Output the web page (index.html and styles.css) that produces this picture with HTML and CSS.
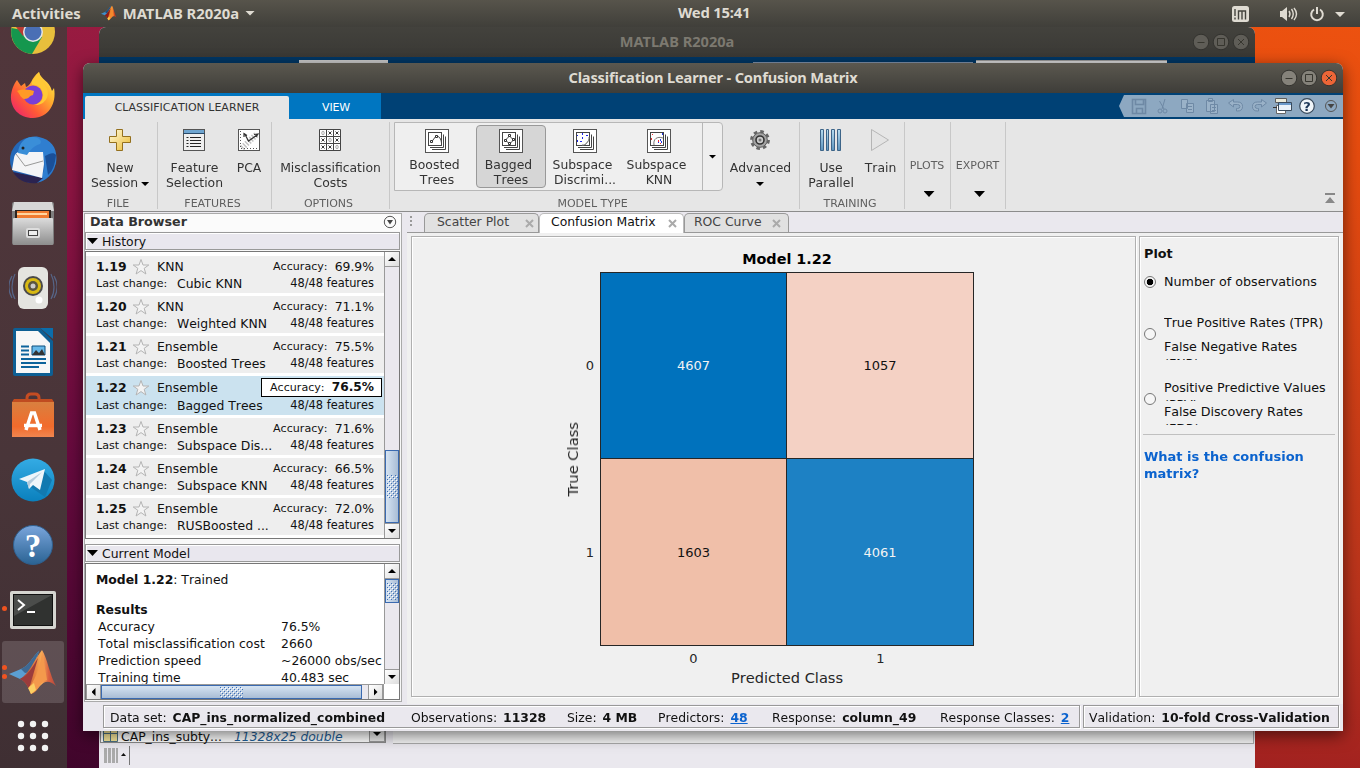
FILE: index.html
```
<!DOCTYPE html>
<html lang="en">
<head>
<meta charset="utf-8">
<title>Classification Learner - Confusion Matrix</title>
<link rel="stylesheet" href="styles.css">
</head>
<body>
<svg class="defs" width="0" height="0">
  <defs>
    <linearGradient id="gold" x1="0" y1="0" x2="1" y2="1"><stop offset="0" stop-color="#fffbe0"/><stop offset="1" stop-color="#eab92e"/></linearGradient>
    <linearGradient id="bar" x1="0" y1="0" x2="0" y2="1"><stop offset="0" stop-color="#b5dcf0"/><stop offset="1" stop-color="#5b93bd"/></linearGradient>
    <linearGradient id="fox" x1="1" y1="0" x2="0" y2="1"><stop offset="0" stop-color="#fff44f"/><stop offset=".35" stop-color="#ffb02e"/><stop offset=".65" stop-color="#ff5a36"/><stop offset="1" stop-color="#e8167a"/></linearGradient>
    <linearGradient id="peak" x1="0" y1="0" x2="1" y2="0"><stop offset="0" stop-color="#7d1b1b"/><stop offset=".4" stop-color="#e0691e"/><stop offset=".6" stop-color="#f8a13c"/><stop offset=".8" stop-color="#d2441f"/><stop offset="1" stop-color="#a52a1c"/></linearGradient>
    <linearGradient id="bag" x1="0" y1="0" x2="0" y2="1"><stop offset="0" stop-color="#d9803f"/><stop offset=".7" stop-color="#f26b2c"/><stop offset="1" stop-color="#f08650"/></linearGradient>
    <linearGradient id="tele" x1="0" y1="0" x2="0" y2="1"><stop offset="0" stop-color="#34abe4"/><stop offset="1" stop-color="#0a80bd"/></linearGradient>
    <linearGradient id="helpg" x1="0" y1="0" x2="0" y2="1"><stop offset="0" stop-color="#7aa5dc"/><stop offset="1" stop-color="#2a6393"/></linearGradient>
    <linearGradient id="steel" x1="0" y1="0" x2="0" y2="1"><stop offset="0" stop-color="#dcdcdc"/><stop offset="1" stop-color="#8d8d8d"/></linearGradient>
    <symbol id="star" viewBox="0 0 18 18"><path d="M9 1.500 11 7H16.800L12.200 10.300 13.900 16 9 12.600 4.100 16 5.800 10.300 1.200 7H7Z" fill="#f3f3f3" stroke="#b4b4b4"/></symbol>
    <symbol id="matlab" viewBox="0 0 48 48">
      <path d="M0 26 12 21C20 18 24 8 30 3L25 19 19 35 11 31Z" fill="#3f8fcb"/>
      <path d="M12 21C20 18 24 8 30 3L22 24 16 25Z" fill="#1d4f80"/>
      <path d="M11 31C20 26 25 12 33 2 38 9 41 28 47 38 40 32 36 33 31 38 27 43 26 45 22 46 20 40 17 34 11 31Z" fill="url(#peak)"/>
      <path d="M11 31C18 29 24 18 29 10L20 41C17 35 15 32 11 31Z" fill="#8a1a1a"/>
      <path d="M33 3C32 15 27 32 20 39L22 46C30 42 30 34 38 32Z" fill="#f3882d"/>
      <path d="M19 40 22 46 27 42 25 35Z" fill="#fcc748"/>
    </symbol>
    <symbol id="stack" viewBox="0 0 24 24"><rect x=".5" y=".5" width="23" height="23" fill="#fff" stroke="#555"/><path d="M7 20.500H20.500V7.500M5 18.500H18.500V5.500" fill="none" stroke="#444"/><rect x="3.500" y="3.500" width="13" height="13" fill="#fff" stroke="#444"/></symbol>
    <pattern id="dots" width="4" height="4" patternUnits="userSpaceOnUse"><path d="M0 0h1v1H0zM2 2h1v1H2z" fill="#3f6fb5"/><path d="M1 1h1v1H1zM3 3h1v1H3z" fill="#fff"/></pattern>
  </defs>
</svg>

<div class="desktop">
  <div class="window back">
    <div class="back-title"><span>MATLAB R2020a</span>
      <svg class="wbtns" width="56" height="18" viewBox="0 0 56 18"><g fill="#5f5d57" stroke="#34332f"><circle cx="8" cy="9" r="7.800"/><circle cx="28" cy="9" r="7.800"/><circle cx="48" cy="9" r="7.800"/></g><path d="M4.500 9.500h7M24.500 5.500h7v7h-7zM45 6l6 6M51 6l-6 6" fill="none" stroke="#37362f"/></svg>
    </div>
    <div class="back-strip"><i class="bt1"></i><i class="bt2"></i><i class="bt3"></i></div>
    <div class="back-body">
      <div class="workspace">
        <svg width="15" height="14" viewBox="0 0 15 14"><path d="M.5-3V13.500H14.500V-3M.500 5.500H14.500M7.500-3V13" fill="#f7e79a" stroke="#4d7285"/></svg>
        <span class="wname">CAP_ins_subty...</span><span class="wval">11328x25 double</span>
        <b class="wdrop"><i class="tri"></i></b>
      </div>
      <div class="command"></div>
    </div>
    <div class="back-status"><svg width="28" height="20" viewBox="0 0 28 20"><path d="M1 2h3v15H1zM5 2h3v15H5zM9 2h3v15H9zM13 2h2v15h-2z" fill="#aaa"/><path d="M18 10h5l-2.500-3z" fill="#111"/><path d="M26.500 0v19" stroke="#777"/></svg></div>
  </div>

  <div class="window front">
    <div class="title"><span>Classification Learner - Confusion Matrix</span>
      <svg class="wbtns" width="56" height="18" viewBox="0 0 56 18"><g fill="#85827a" stroke="#34332f"><circle cx="8" cy="9" r="7.800"/><circle cx="28" cy="9" r="7.800"/><circle cx="48" cy="9" r="7.800" fill="#ec6537"/></g><path d="M4.500 9.500h7M24.500 5.500h7v7h-7zM45 6l6 6M51 6l-6 6" fill="none" stroke="#37362f"/></svg>
    </div>
    <div class="tabstrip">
      <div class="tabs"><div class="tab on">CLASSIFICATION LEARNER</div><div class="tab">VIEW</div></div>
      <svg class="quick" width="224" height="22" viewBox="0 0 224 22">
        <path d="M5 0H224V22H5L0 11Z" fill="#8da8c1"/>
        <g fill="none" stroke="#6e89a5">
          <path d="M13.500 4.500h13v14h-13zM16.500 4.500v5h8v-5M17.500 18.500v-5h6v5" stroke-width="1.600"/>
          <path d="M46 4l-3 10M40.500 6 45 14"/><circle cx="41" cy="16" r="2"/><circle cx="46" cy="16" r="2"/>
          <path d="M62.500 4.500h6v9h-6zM67.500 8.500h7v9h-7zM69 11.500h4M69 14.500h4" fill="#9ab2c8"/>
          <path d="M87.500 5.500h8v11h-8zM89.500 3.500h4v3h-4zM91.500 9.500h7v9h-7zM93 12.500h4M93 15.500h4" fill="#9ab2c8"/>
          <path d="M114.500 4.500v2.500h4q5 0 5 4.500t-5 4.500h-1v-2.500h1q2.500 0 2.500-2t-2.500-2h-4v2.500l-5-4z" fill="#9ab2c8"/>
          <path d="M142.500 4.500v2.500h-4q-5 0-5 4.500t5 4.500h1v-2.500h-1q-2.500 0-2.500-2t2.500-2h4v2.500l5-4z" fill="#9ab2c8"/>
        </g>
        <path d="M156.500 3.500h11v4h-11z" fill="#e9e9d9" stroke="#5d5d5d"/><path d="M157.500 10.500h9v8h-9z" fill="#fff" stroke="#666"/><path d="M159.500 7.500h13v8h-13z" fill="#e9f2fa" stroke="#394a5c"/><path d="M160 8h12v2h-12z" fill="#6a9acb"/><path d="M154 12.500h4" stroke="#333"/>
        <circle cx="188" cy="11" r="7.300" fill="#f0f5f9" stroke="#38495b" stroke-width="1.200"/><text x="188" y="16" class="q">?</text>
        <circle cx="212" cy="11" r="5.500" fill="none" stroke="#555"/><path d="M208.500 9h7L212 13.500z" fill="#444"/>
      </svg>
    </div>

    <div class="toolstrip">
      <section class="sec s-file"><div class="btns">
        <div class="btn"><svg width="24" height="24" viewBox="0 0 24 24"><path d="M8.500 1.500h6v7h8v6h-8v8h-6v-8h-7v-6h7z" fill="url(#gold)" stroke="#94701e"/></svg><span>New</span><span>Session <i class="tri"></i></span></div>
      </div><h4>FILE</h4></section>
      <section class="sec s-feat"><div class="btns">
        <div class="btn w76"><svg width="24" height="24" viewBox="0 0 24 24"><rect x="1.500" y="1.500" width="21" height="21" fill="#efefef" stroke="#555"/><path d="M2 2h20v3H2z" fill="#6fa5d0"/><path d="M1 5.500h22" stroke="#2a4a68"/><path d="M8 9.500h11M8 12.500h11M8 15.500h11M8 18.500h11M4.500 9.500h2M4.500 12.500h2M4.500 15.500h2M4.500 18.500h2" stroke="#222"/></svg><span>Feature</span><span>Selection</span></div>
        <div class="btn w34"><svg width="24" height="24" viewBox="0 0 24 24"><rect x="1.500" y="1.500" width="21" height="21" fill="#fff" stroke="#555"/><path d="M5 20 20 6" stroke="#aaa" stroke-width="6" stroke-dasharray="1.500 1.500" opacity=".7"/><path d="M7.500 5.500l4 7.500L20 7M17 6.500l4-.5-2 3M7 9V5.500l3 2" fill="none" stroke="#333" stroke-width="1.200"/><path d="M3.500 3v17.500H22" fill="none" stroke="#555" stroke-dasharray="1 2"/></svg><span>PCA</span></div>
      </div><h4>FEATURES</h4></section>
      <section class="sec s-opt"><div class="btns">
        <div class="btn"><svg width="24" height="24" viewBox="0 0 24 24"><path d="M1.500 1.500h21v21h-21zM8.500 1v22M15.500 1v22M1 8.500h22M1 15.500h22" fill="#fff" stroke="#444"/><path d="M10.500 3.500l3 3m0-3l-3 3M17.500 3.500l3 3m0-3l-3 3M3.500 10.500l3 3m0-3l-3 3M17.500 10.500l3 3m0-3l-3 3M3.500 17.500l3 3m0-3l-3 3M10.500 17.500l3 3m0-3l-3 3" stroke="#222" stroke-width=".9"/><g fill="none" stroke="#aaa"><ellipse cx="5" cy="5" rx="1.200" ry="1.800"/><ellipse cx="12" cy="12" rx="1.200" ry="1.800"/><ellipse cx="19" cy="19" rx="1.200" ry="1.800"/></g></svg><span>Misclassification</span><span>Costs</span></div>
      </div><h4>OPTIONS</h4></section>
      <section class="sec s-model"><div class="model-row">
        <div class="gallery">
          <div class="cell"><svg width="24" height="24" viewBox="0 0 24 24"><use href="#stack"/><path d="M6.500 13l4.500-6c3.500 0 5 3 5.500 7" fill="none" stroke="#444"/><path d="M5.500 11.500h2v2h-2zM10.500 6.500h2v2h-2z" fill="#fff" stroke="#333"/></svg><span class="nudge">Boosted</span><span>Trees</span></div>
          <div class="cell sel"><svg width="24" height="24" viewBox="0 0 24 24"><use href="#stack"/><path d="M6.500 11 10.500 7 14.500 11 10.500 15Z" fill="none" stroke="#444"/><path d="M5.500 10.500h2v2h-2zM9.500 5.500h2v2h-2zM13.500 9.500h2v2h-2zM9.500 13.500h2v2h-2z" fill="#fff" stroke="#333"/></svg><span class="nudge">Bagged</span><span>Trees</span></div>
          <div class="cell"><svg width="24" height="24" viewBox="0 0 24 24"><use href="#stack"/><path d="M9 4h1v2H9zM4 6h1v1H4zM13 6h2v1h-2zM4 11h1v2H4zM9 8h1v2H9zM7 12h2v1H7z" fill="#1d28e8"/><path d="M16 8c0 5-3 8-7 8M16 11l-4 5" fill="none" stroke="#888"/></svg><span class="nudge">Subspace</span><span>Discrimi...</span></div>
          <div class="cell"><svg width="24" height="24" viewBox="0 0 24 24"><use href="#stack"/><path d="M5 5h1v1H5zM4 9h1v2H4zM11 11h1v2h-1zM13 14h1v1h-1z" fill="#e33"/><path d="M15 4h1v2h-1zM13 10h1v2h-1zM14 12h1v2h-1zM11 13h1v1h-1z" fill="#2233e0"/><path d="M7 16c-1-6 3-9 9-7" fill="none" stroke="#777"/></svg><span class="nudge">Subspace</span><span>KNN</span></div>
          <div class="more"><i class="tri"></i></div>
        </div>
        <div class="btn adv"><svg width="24" height="24" viewBox="0 0 24 24"><circle cx="12" cy="12" r="8.600" fill="none" stroke="#666" stroke-width="2.600" stroke-dasharray="3.600 3.150"/><circle cx="12" cy="12" r="7.300" fill="#a4a4a4" stroke="#5a5a5a"/><circle cx="12" cy="12" r="4" fill="#ccc" stroke="#333" stroke-width="1.600"/><circle cx="12" cy="12" r="1.500" fill="#777"/></svg><span>Advanced</span><span><i class="tri"></i></span></div>
      </div><h4>MODEL TYPE</h4></section>
      <section class="sec s-train"><div class="btns">
        <div class="btn w64"><svg width="24" height="24" viewBox="0 0 24 24"><path d="M1.500 1.500h3v21h-3zM7.500 1.500h2v21h-2zM12.500 1.500h3v21h-3zM18.500 1.500h3v21h-3z" fill="url(#bar)" stroke="#3c6488"/></svg><span>Use</span><span>Parallel</span></div>
        <div class="btn w34"><svg width="24" height="24" viewBox="0 0 24 24"><path d="M3.500 1.500 20.500 12 3.500 22.500Z" fill="#e4e4e4" stroke="#b5b5b5"/></svg><span>Train</span></div>
      </div><h4>TRAINING</h4></section>
      <section class="sec s-plots"><h4>PLOTS</h4><i class="tri big"></i></section>
      <section class="sec s-exp"><h4>EXPORT</h4><i class="tri big"></i></section>
      <svg class="collapse" width="12" height="12" viewBox="0 0 12 12"><path d="M1 1h10v2H1zM1 11h10L6 5z" fill="#888"/></svg>
    </div>

    <div class="main">
      <aside class="browser">
        <header class="db-head"><b>Data Browser</b><svg width="14" height="14" viewBox="0 0 14 14"><circle cx="7" cy="7" r="5.700" fill="none" stroke="#555"/><path d="M4 5h6L7 9.500z" fill="#444"/></svg></header>
        <div class="group"><i class="tri"></i>History</div>
        <div class="history">
          <ul>
            <li><b>1.19</b><svg width="18" height="18"><use href="#star"/></svg><span>KNN</span><small>Accuracy:</small><em>69.9%</em><small class="lc">Last change:</small><span class="mt">Cubic KNN</span><small class="ft">48/48 features</small></li>
            <li><b>1.20</b><svg width="18" height="18"><use href="#star"/></svg><span>KNN</span><small>Accuracy:</small><em>71.1%</em><small class="lc">Last change:</small><span class="mt">Weighted KNN</span><small class="ft">48/48 features</small></li>
            <li><b>1.21</b><svg width="18" height="18"><use href="#star"/></svg><span>Ensemble</span><small>Accuracy:</small><em>75.5%</em><small class="lc">Last change:</small><span class="mt">Boosted Trees</span><small class="ft">48/48 features</small></li>
            <li class="cur"><b>1.22</b><svg width="18" height="18"><use href="#star"/></svg><span>Ensemble</span><div class="best"><small>Accuracy:</small><em>76.5%</em></div><small class="lc">Last change:</small><span class="mt">Bagged Trees</span><small class="ft">48/48 features</small></li>
            <li><b>1.23</b><svg width="18" height="18"><use href="#star"/></svg><span>Ensemble</span><small>Accuracy:</small><em>71.6%</em><small class="lc">Last change:</small><span class="mt">Subspace Dis...</span><small class="ft">48/48 features</small></li>
            <li><b>1.24</b><svg width="18" height="18"><use href="#star"/></svg><span>Ensemble</span><small>Accuracy:</small><em>66.5%</em><small class="lc">Last change:</small><span class="mt">Subspace KNN</span><small class="ft">48/48 features</small></li>
            <li><b>1.25</b><svg width="18" height="18"><use href="#star"/></svg><span>Ensemble</span><small>Accuracy:</small><em>72.0%</em><small class="lc">Last change:</small><span class="mt">RUSBoosted ...</span><small class="ft">48/48 features</small></li>
          </ul>
          <div class="vbar"><i class="ab"><i class="tri up"></i></i><i class="track"></i><i class="thumb h1"><svg width="11" height="23"><rect width="11" height="23" fill="url(#dots)"/></svg></i><i class="ab"><i class="tri"></i></i></div>
        </div>
        <div class="group cm"><i class="tri"></i>Current Model</div>
        <div class="model">
          <div class="mtext">
            <p><b>Model 1.22</b>: Trained</p>
            <p class="res"><b>Results</b></p>
            <dl><dt>Accuracy</dt><dd>76.5%</dd><dt>Total misclassification cost</dt><dd>2660</dd><dt>Prediction speed</dt><dd>~26000 obs/sec</dd><dt>Training time</dt><dd>40.483 sec</dd></dl>
          </div>
          <div class="vbar"><i class="ab"><i class="tri up"></i></i><i class="thumb h2"><svg width="11" height="17"><rect width="11" height="17" fill="url(#dots)"/></svg></i><i class="track"></i><i class="ab"><i class="tri"></i></i></div>
          <div class="hbar"><i class="ab"><i class="tri left"></i></i><i class="thumb h3"><svg width="23" height="11"><rect width="23" height="11" fill="url(#dots)"/></svg></i><i class="track"></i><i class="ab"><i class="tri right"></i></i></div>
        </div>
      </aside>

      <div class="docs">
        <nav class="doctabs"><svg class="grip" width="4" height="12" viewBox="0 0 4 12"><path d="M1 1h2v2H1zM1 5h2v2H1zM1 9h2v2H1z" fill="#999"/></svg>
          <div class="dt d1"><span>Scatter Plot</span><svg width="9" height="9" viewBox="0 0 9 9"><path d="M1 1l7 7M8 1 1 8"/></svg></div>
          <div class="dt d2 on"><span>Confusion Matrix</span><svg width="9" height="9" viewBox="0 0 9 9"><path d="M1 1l7 7M8 1 1 8"/></svg></div>
          <div class="dt d3"><span>ROC Curve</span><svg width="9" height="9" viewBox="0 0 9 9"><path d="M1 1l7 7M8 1 1 8"/></svg></div>
        </nav>
        <div class="panes">
          <div class="pane plot">
            <h3>Model 1.22</h3>
            <div class="ylab"><span>True Class</span></div>
            <div class="yticks"><span>0</span><span>1</span></div>
            <div class="matrix"><div class="c a">4607</div><div class="c b">1057</div><div class="c d">1603</div><div class="c e">4061</div></div>
            <div class="xticks"><span>0</span><span>1</span></div>
            <div class="xlab">Predicted Class</div>
          </div>
          <div class="pane opts">
            <h5>Plot</h5>
            <div class="radio r1"><i class="dot on"></i><div><span>Number of observations</span></div></div>
            <div class="radio r2"><i class="dot"></i><div><span>True Positive Rates (TPR)</span><span>False Negative Rates<br>(FNR)</span></div></div>
            <div class="radio r3"><i class="dot"></i><div><span>Positive Predictive Values<br>(PPV)</span><span>False Discovery Rates<br>(FDR)</span></div></div>
            <hr>
            <a>What is the confusion<br>matrix?</a>
          </div>
        </div>
      </div>
    </div>

    <footer class="status">
      <div class="sbox info"><span>Data set: <b>CAP_ins_normalized_combined</b></span><span>Observations: <b>11328</b></span><span>Size: <b>4 MB</b></span><span>Predictors: <b class="lk">48</b></span><span>Response: <b>column_49</b></span><span>Response Classes: <b class="lk">2</b></span></div>
      <div class="sbox valid"><span>Validation: <b>10-fold Cross-Validation</b></span></div>
    </footer>
  </div>

  <div class="dock">
    <div class="app"><svg viewBox="0 0 48 48"><circle cx="24" cy="24" r="22" fill="#e8bf3c"/><path d="M24 24 2.500 20A22 22 0 0 0 23 46L33 29Z" fill="#15974e"/><path d="M4 15A22 22 0 0 1 45 17H24L14 28Z" fill="#b83b33"/><circle cx="24" cy="24" r="10" fill="#e6e6e6"/><circle cx="24" cy="24" r="8.500" fill="#4a6fb5"/></svg></div>
    <div class="app"><svg viewBox="0 0 48 48"><path d="M24 46C10 46 1 36 2 23 3 16 5 12 8 8L12 14 16 11 17 15C22 14 22 6 30 0 32 8 40 8 43 19L45 16C48 32 39 46 24 46Z" fill="url(#fox)"/><circle cx="24" cy="23" r="9.500" fill="#7a3fd6"/><path d="M8 19c6-3 14-1 17 0l-1 4c-5 1-3 4-9 4-4-2-4-5-7-8z" fill="#ff9a26"/><path d="M30 0c-4 7-8 7-7 13 6-1 10 4 11 8 1 6-3 11-9 12 12 1 17-11 12-18C35 10 31 7 30 0z" fill="#ffc935"/></svg></div>
    <div class="app"><svg viewBox="0 0 48 48"><circle cx="24" cy="24" r="23" fill="#2468b8"/><path d="M11 15C12 4 20-1 30 1c14 3 19 13 17 26C43 39 37 45 27 47c8-8 10-15 8-24z" fill="#2f7ed0"/><path d="M36 20c5-3 9-4 11-1-1 9-3 16-8 20z" fill="#1a4f98"/><path d="M4 36 34 42 28 47C18 48 9 45 4 36Z" fill="#2b2350"/><path d="M5 22C6 15 14 14 20 16L34 16 35 28 33 42 3 34Z" fill="#f4f4f6"/><path d="M7 18l9 12 18-5" fill="none" stroke="#999"/><path d="M9 17C10 5 18 0 25 1c7 1 8 5 6 7-6 2-9 5-13 11z" fill="#3a8ed8"/><circle cx="14" cy="12" r="1.500" fill="#222"/></svg></div>
    <div class="app"><svg viewBox="0 0 48 48"><rect x="3" y="2" width="42" height="43" rx="2" fill="#7e7e7e"/><path d="M5 2h38l2 9H3z" fill="#d7d7d7"/><path d="M6 10h36v11H6z" fill="#2c2420"/><path d="M8 11h32v9H8z" fill="#f07b30"/><path d="M8 13h30v2H8z" fill="#ffd5a0"/><rect x="4" y="18" width="40" height="27" rx="1" fill="url(#steel)"/><rect x="17" y="28" width="14" height="10" rx="2" fill="#ddd"/><rect x="19.500" y="30.500" width="9" height="5" fill="#eee" stroke="#444"/></svg></div>
    <div class="app"><svg viewBox="0 0 48 48"><g fill="none" stroke="#566486" stroke-width="1.200"><path d="M6 10c-4 8-4 18 0 25M42 10c4 8 4 18 0 25M3 12c-4 7-4 15 0 22M45 12c4 7 4 15 0 22"/></g><rect x="9" y="3" width="30" height="42" rx="6" fill="#e4e4e0"/><circle cx="24" cy="22" r="10" fill="#4a4a4a"/><circle cx="24" cy="22" r="8" fill="#d8b913"/><circle cx="24" cy="22" r="5" fill="#5a5540"/><circle cx="24" cy="22" r="2.500" fill="#ccc"/><circle cx="30" cy="36" r="3.500" fill="#fff"/></svg></div>
    <div class="app"><svg viewBox="0 0 48 48"><path d="M6 0h25l13 13v33q0 2-2 2H6q-2 0-2-2V2q0-2 2-2z" fill="#0d5f94"/><path d="M7 3h22l12 12v30H7z" fill="#f7f7f7"/><path d="M31 0h13v11z" fill="#0b6daa"/><path d="M12 18.500h8M12 22.500h8M12 26.500h8M12 31h25M12 35h25M12 39h18" stroke="#0c639b" stroke-width="2"/><path d="M23 18h13v9H23z" fill="#67b9ea" stroke="#0c4f7d"/><path d="M23 27l4-5 3 3 3-4 3 6z" fill="#333"/></svg></div>
    <div class="app"><svg viewBox="0 0 48 48"><path d="M18 14V6q0-4 4-4h4q4 0 4 4v8" fill="none" stroke="#c54c22" stroke-width="3"/><path d="M3 10h42v35H3z" fill="url(#bag)"/><path d="M3 10l2-3h38l2 3z" fill="#c04c20"/><path d="M17 38l5.500-17h3L31 38M15 33.500h18" fill="none" stroke="#fff" stroke-width="3.400"/></svg></div>
    <div class="app"><svg viewBox="0 0 48 48"><circle cx="24" cy="24" r="21.500" fill="url(#tele)"/><path d="M35 15 43 24 36 41 20 30z" fill="#1279b0"/><path d="M10 23 36 13 31 34 24 29 20 33 18 26Z" fill="#eef5fa"/><path d="M18 26 33 16 21 28 20 33Z" fill="#b5cbdc"/></svg></div>
    <div class="app"><svg viewBox="0 0 48 48"><circle cx="24" cy="25" r="19.500" fill="url(#helpg)" stroke="#2f5f8e"/><text x="24" y="37" class="bigq">?</text></svg></div>
    <div class="app"><svg viewBox="0 0 48 48"><rect x="1" y="7" width="46" height="38" rx="2" fill="#d5d5d0"/><rect x="4.500" y="10.500" width="39" height="31" fill="#303230" stroke="#111"/><path d="M5 11h38L5 32z" fill="#4b4d4b"/><path d="M9 16l6 5-6 5M18 28h8" fill="none" stroke="#fff" stroke-width="2"/></svg><i class="run r-one"></i></div>
    <div class="app active"><svg viewBox="0 0 48 48"><use href="#matlab"/></svg><i class="run r-a"></i><i class="run r-b"></i></div>
    <div class="app"><svg viewBox="0 0 48 48"><g fill="#f2f2f2"><circle cx="12" cy="12" r="3.200"/><circle cx="24" cy="12" r="3.200"/><circle cx="36" cy="12" r="3.200"/><circle cx="12" cy="24" r="3.200"/><circle cx="24" cy="24" r="3.200"/><circle cx="36" cy="24" r="3.200"/><circle cx="12" cy="36" r="3.200"/><circle cx="24" cy="36" r="3.200"/><circle cx="36" cy="36" r="3.200"/></g></svg></div>
  </div>

  <div class="topbar">
    <span class="act">Activities</span>
    <span class="appmenu"><svg width="16" height="16" viewBox="0 0 48 48"><use href="#matlab"/></svg><span>MATLAB R2020a</span><i class="tri"></i></span>
    <span class="clock">Wed 15:41</span>
    <svg class="tray" width="120" height="20" viewBox="0 0 120 20">
      <rect x="3" y="2" width="17" height="16" rx="2.500" fill="#dfdbd2"/><path d="M6 5v7M6 13.500v2M9.500 15.500V7h7v8.500M13 7v8.500" fill="none" stroke="#45443e" stroke-width="1.400"/>
      <g fill="none" stroke="#dfdbd2" stroke-width="1.400"><path d="M60 7q2 3 0 6M62.500 5q3.500 5 0 10M65 4q5 6 0 12"/><path d="M85 5.500a5.800 5.800 0 1 0 6 0M88 3v7" stroke-width="2"/></g>
      <path d="M51 7h2l5-4v14l-5-4h-2zM106 8h10l-5 5z" fill="#dfdbd2"/>
    </svg>
  </div>
</div>
</body>
</html>
```

FILE: styles.css
```
* { box-sizing: border-box; }
body { margin: 0; font: 12.4px/15px "DejaVu Sans", sans-serif; color: #111; font-kerning: none; }
i, em { font-style: normal; }
i { display: block; }
svg { display: block; flex: none; }
ul, p, dl, dd, h3, h4, h5 { margin: 0; padding: 0; }
.defs { position: absolute; }
.tri { display: inline-block; width: 8px; height: 4px; background: #000; clip-path: polygon(0 0, 100% 0, 50% 100%); flex: none; }
.tri.up { clip-path: polygon(0 100%, 100% 100%, 50% 0); }
.tri.left { width: 4px; height: 8px; clip-path: polygon(100% 0, 100% 100%, 0 50%); }
.tri.right { width: 4px; height: 8px; clip-path: polygon(0 0, 0 100%, 100% 50%); }

.desktop { position: relative; width: 1360px; height: 768px; overflow: hidden; background: linear-gradient(180deg, #9a1c40 0, #8c1442 25%, #660a3e 60%, #40052b 100%); }
.desktop::before { content: ""; position: absolute; inset: 0 0 0 1200px; background: linear-gradient(190deg, #ee5310 0, #e54b0f 20%, #b8331c 75%, #a02020 100%); }

/* shell */
.topbar { position: absolute; left: 0; top: 0; width: 1360px; height: 27px; display: flex; align-items: center; background: linear-gradient(#57544b, #403f3a); color: #dfdbd2; font: bold 14.8px/25px "Noto Sans", sans-serif; }
.topbar > span { margin-bottom: 1px; }
.act { margin-left: 12px; }
.appmenu { display: flex; align-items: center; gap: 6px; margin-left: 20px; }
.appmenu .tri { width: 10px; height: 5px; background: #dfdbd2; }
.clock { position: absolute; left: 678px; top: 0; letter-spacing: -.2px; }
.tray { margin-left: auto; margin-right: 11px; }
.dock { position: absolute; left: 0; top: 0; width: 67px; height: 768px; display: grid; grid-template-rows: repeat(12, 64px); background: linear-gradient(#51363b, #493539 60%, #3f2f33); }
.app { position: relative; display: grid; place-items: center; width: 66px; }
.app > svg { width: 48px; height: 48px; }
.app.active::before { content: ""; position: absolute; left: 2px; top: 1px; width: 62px; height: 62px; border-radius: 3px; background: rgba(255,255,255,.15); }
.run { position: absolute; left: 2px; width: 5px; height: 5px; border-radius: 50%; background: #f05320; }
.r-one { top: 30px; } .r-a { top: 25px; } .r-b { top: 34px; }
.bigq { font: bold 33px "Liberation Serif", serif; fill: #fff; text-anchor: middle; }

/* windows */
.window { position: absolute; display: flex; flex-direction: column; border-radius: 7px 7px 0 0; overflow: hidden; }
.back { left: 99px; top: 27px; width: 1156px; height: 741px; background: #eae8ee; }
.back-title { position: relative; flex: 0 0 30px; background: linear-gradient(#43423d, #3a3935); color: #7c7970; text-align: center; font: bold 14.6px/29px "Noto Sans", sans-serif; }
.wbtns { position: absolute; right: 6px; top: 6px; }
.back-strip { flex: 0 0 7px; background: #003765; display: flex; align-items: flex-end; }
.back-strip i { flex: none; }
.bt1 { width: 89px; height: 4px; margin-left: 200px; background: #ccc; }
.bt2 { width: 220px; height: 2px; margin-left: 365px; background: #8293ad; }
.bt3 { width: 191px; height: 4px; margin-left: 3px; background: #d8d8d8; border-top: 1px solid #999; }
.back-body { flex: 1; display: flex; align-items: flex-end; padding: 0 1px 0 1px; background: #eae8ee; }
.workspace { width: 286px; height: 30px; display: flex; align-items: flex-end; border: 1px solid #8a8a8a; border-top: 0; background: #fff; padding-left: 2px; }
.wname { margin-left: 3px; line-height: 11px; }
.wval { margin-left: 12px; font-style: italic; font-size: 12.4px; color: #1f5f99; line-height: 11px; }
.wdrop { margin-left: auto; width: 16px; height: 28px; border: 1px solid #999; background: #e8e8e8; display: grid; place-items: end center; padding-bottom: 5px; }
.command { flex: 1; height: 100px; margin-left: 7px; border: 1px solid #aaa; border-left: 0; background: #f4f4f4; margin-bottom: -1px; }
.back-status { flex: 0 0 24px; padding: 2px 4px; margin-top: 1px; }

.front { left: 83px; top: 63px; width: 1260px; height: 668px; background: #eae8ee; filter: drop-shadow(0 4px 8px rgba(0,0,0,.55)); }
.title { position: relative; flex: 0 0 30px; background: linear-gradient(#5b584f, #3e3d39); color: #dfdbd2; text-align: center; font: bold 14.6px/29px "Noto Sans", sans-serif; letter-spacing: -.15px; }
.tabstrip { flex: 0 0 26px; display: flex; justify-content: space-between; background: #004175; }
.tabs { display: flex; align-items: flex-end; width: 298px; padding-left: 2px; background: #0076c1; font-size: 11px; color: #fff; }
.tab { width: 92px; height: 23px; text-align: center; line-height: 23px; padding-left: 2px; letter-spacing: -.2px; }
.tab.on { width: 204px; background: #e6e6e6; color: #333; border-radius: 2px 2px 0 0; padding-left: 0; letter-spacing: 0; }
.quick { margin-top: 2px; }
.q { font: bold 13px "DejaVu Sans", sans-serif; fill: #1b3556; text-anchor: middle; }

.toolstrip { position: relative; flex: 0 0 93px; display: flex; padding-top: 3px; background: #e6e6e6; border-bottom: 1px solid #8c8c8c; color: #333; }
.sec { height: 87px; border-right: 1px solid #c8c8c8; display: flex; flex-direction: column; justify-content: space-between; }
.sec h4 { font: 11px/13px "DejaVu Sans", sans-serif; color: #5f5f5f; text-align: center; padding-right: 4px; margin-bottom: -1px; }
.s-file { width: 75px; } .s-feat { width: 114px; } .s-opt { width: 118px; } .s-model { width: 410px; } .s-train { width: 105px; } .s-plots { width: 46px; } .s-exp { width: 55px; }
.btns { display: flex; }
.s-opt .btns, .s-file .btns { justify-content: center; }
.btn { display: flex; flex-direction: column; align-items: center; padding-top: 6px; white-space: nowrap; }
.btn svg { margin-bottom: 8px; margin-left: -1px; }
.btn .tri { vertical-align: 1px; margin-left: -1px; }
.w76 { width: 73px; } .w34 { width: 36px; } .w64 { width: 62px; }
.model-row { display: flex; padding-left: 4px; }
.gallery { width: 329px; height: 69px; display: flex; border: 1px solid #b7b7b7; border-radius: 0 4px 4px 0; background: #efefef; padding-left: 5px; }
.cell { width: 70px; height: 63px; margin: 2px 2px; padding: 3px 0 0; display: flex; flex-direction: column; align-items: center; border: 1px solid transparent; border-radius: 4px; white-space: nowrap; }
.cell.sel { background: #d6d6d6; border-color: #999; }
.cell svg { margin-bottom: 4px; }
.nudge { padding-right: 5px; }
.more { margin-left: auto; width: 20px; border-left: 1px solid #b7b7b7; display: grid; place-items: center; }
.adv { width: 75px; }
.s-train .w34 { width: 37px; }
.sec.s-plots, .sec.s-exp { align-items: center; justify-content: flex-start; padding-top: 37px; gap: 20px; }
.s-plots h4, .s-exp h4 { padding-right: 1px; }
.tri.big { width: 11px; height: 6px; margin-left: 3px; }
.collapse { position: absolute; right: 7px; bottom: 7px; }

.main { flex: 1; display: flex; min-height: 0; }
.browser { width: 318px; margin: 1px 0 2px 1px; border: 1px solid #aaa; display: flex; flex-direction: column; background: #f8f8f8; }
.db-head { flex: 0 0 17px; display: flex; justify-content: space-between; align-items: center; padding: 0 4px 2px 5px; color: #333; font-size: 12.7px; background: #fbfbfb; }
.group { flex: 0 0 18px; display: flex; align-items: center; gap: 4px; margin: 1px 1px 0 0; border: 1px solid #999; background: #e9e7ee; padding-left: 1px; box-shadow: inset 1px 1px #fff; }
.group .tri { width: 11px; height: 6px; }
.history { flex: 0 0 288px; margin: 1px 1px 0 0; border: 1px solid #777; background: #fff; display: flex; }
.history ul { flex: 1; min-width: 0; list-style: none; padding-top: 4px; display: flex; flex-direction: column; gap: 3px; }
.history li { height: 37px; background: #eee; padding: 2px 10px 0 10px; display: grid; grid-template-columns: 36px 25px 116px 54px 47px; grid-template-rows: 17px 17px; align-items: center; }
li b { font-size: 12.4px; }
li > svg { grid-column: 2; }
li small { font-size: 11.1px; white-space: nowrap; }
li em { text-align: right; }
.lc { grid-row: 2; grid-column: 1 / 4; }
.mt { grid-row: 2; grid-column: 3; margin-left: 20px; white-space: nowrap; }
li .ft { grid-row: 2; grid-column: 4 / 6; text-align: right; font-size: 11.4px; }
.history li.cur { height: 39px; background: #cbe2ef; padding-top: 3px; grid-template-rows: 17px 19px; }
.best { grid-column: 4 / 6; display: flex; justify-content: space-between; align-items: center; width: 121px; height: 19px; margin: 0 -8px 0 0; padding: 0 7px 0 8px; border: 1px solid #000; background: #fff; justify-self: end; }
.best em { font-weight: bold; font-size: 12.2px; }
.vbar { width: 15px; flex: none; display: flex; flex-direction: column; border-left: 1px solid #999; background: #eae8ee; }
.ab { flex: 0 0 15px; display: grid; place-items: center; background: linear-gradient(135deg, #fff, #ddd); border: 1px solid #999; border-width: 0 0 1px; }
.track { flex: 1; }
.vbar .ab:last-child { border-width: 1px 0 0; }
.thumb { border: 1px solid #3a6ab0; background: linear-gradient(90deg, #d5e3f2, #a9bdd5); display: grid; place-items: center; }
.h1 { flex: 0 0 73px; } .h2 { flex: 0 0 24px; }
.cm { margin-top: 5px; }
.model { flex: 1; min-height: 0; margin: 1px 1px 1px 0; border: 1px solid #777; background: #fff; display: grid; grid-template-columns: minmax(0, 1fr) 15px; grid-template-rows: 1fr 15px; }
.mtext { min-height: 0; overflow: hidden; padding: 8px 0 0 10px; white-space: nowrap; }
.mtext .res { margin-top: 15px; }
.mtext dl { display: grid; grid-template-columns: 183px 1fr; line-height: 17px; padding: 1px 0 0 2px; }
.model .vbar { grid-column: 2; grid-row: 1; min-height: 0; }
.hbar { grid-row: 2; display: flex; border-top: 1px solid #999; border-right: 1px solid #999; background: #eae8ee; }
.hbar .ab { border-width: 0 1px; }
.h3 { flex: 0 0 261px; background: linear-gradient(#d5e3f2, #a9bdd5); }

.docs { flex: 1; display: flex; flex-direction: column; margin-left: 5px; }
.doctabs { height: 20px; display: flex; padding-left: 2px; align-items: flex-end; border-bottom: 1px solid #999; margin-top: 1px; }
.grip { margin: 0 11px 5px 0; }
.dt { height: 19px; display: flex; align-items: center; justify-content: space-between; padding: 0 4px 3px 12px; border: 1px solid #999; border-bottom: 0; border-radius: 5px 5px 0 0; background: #e1e1e1; color: #444; }
.dt svg { margin-top: 4px; stroke: #aaa; stroke-width: 2; }
.d1 { width: 115px; } .d2 { width: 145px; padding-left: 11px; padding-right: 6px; } .d3 { width: 105px; padding-left: 9px; padding-right: 7px; }
.dt.on { height: 20px; background: #fff; border-color: #bbb; color: #111; margin-bottom: -1px; padding-bottom: 4px; }
.panes { flex: 1; display: flex; padding: 3px 5px 7px 4px; background: #f0f0f0; gap: 3px; }
.pane { border: 1px solid #b0b0b0; box-shadow: inset 1px 1px #fff, 1px 1px #fff; }
.plot { width: 725px; display: grid; grid-template-columns: 152px 36px 374px 1fr; grid-template-rows: 35px 374px 22px 1fr; color: #262626; font-size: 13px; }
.plot h3 { grid-column: 3; font-size: 14.4px; text-align: center; color: #000; align-self: end; line-height: 25px; }
.ylab { grid-row: 2; grid-column: 1; display: flex; justify-content: flex-end; align-items: center; }
.ylab span { writing-mode: vertical-rl; transform: rotate(180deg); font-size: 14.7px; line-height: 18px; margin-right: -18px; }
.yticks { grid-row: 2; grid-column: 2; display: grid; grid-template-rows: 1fr 1fr; align-items: center; justify-items: end; padding-right: 6px; }
.matrix { grid-row: 2; grid-column: 3; display: grid; grid-template: 185px 186px / 185px 186px; gap: 1px; border: 1px solid #262626; background: #262626; }
.c { display: grid; place-items: center; color: #111; }
.a { background: #0072bd; color: #f3f3f3; } .b { background: #f4d1c4; } .d { background: #f0bfa9; } .e { background: #1d81c4; color: #f3f3f3; }
.xticks { grid-row: 3; grid-column: 3; display: grid; grid-template-columns: 1fr 1fr; text-align: center; line-height: 26px; }
.xlab { grid-row: 4; grid-column: 3; text-align: center; font-size: 14.6px; line-height: 20px; }
.opts { flex: 1; padding: 9px 4px; display: flex; flex-direction: column; font-size: 12.7px; }
.opts h5 { font-size: 12.8px; line-height: 15px; }
.radio { display: flex; gap: 8px; align-items: center; white-space: nowrap; }
.radio span { display: block; }
.dot { width: 12px; height: 12px; border: 1px solid #777; border-radius: 50%; background: #f6f6f6; flex: none; }
.dot.on { background: radial-gradient(#000 3px, #f6f6f6 3.6px); }
.r1 { margin-top: 13px; }
.r2 { margin-top: 25px; letter-spacing: -.05px; } .r3 { margin-top: 19px; letter-spacing: -.05px; }
.r2 .dot, .r3 .dot { margin-bottom: 6px; }
.r2 span, .r3 span { height: 22px; line-height: 17px; overflow: hidden; }
.r2 span + span, .r3 span + span { margin-top: 2px; }
.opts hr { border: 0; border-top: 1px solid #c0c0c0; margin: 9px -1px 13px; width: 192px; }
.opts a { color: #0b63ce; font-weight: bold; line-height: 17px; font-size: 13px; }

.status { flex: 0 0 27px; display: flex; gap: 3px; padding: 1px 4px 3px 20px; white-space: nowrap; }
.sbox { border: 1px solid #999; box-shadow: inset 1px 1px #fff, 1px 1px #fff; height: 23px; padding-left: 6px; line-height: 23px; }
.info { width: 977px; display: grid; grid-template-columns: 301px 156px 91px 114px 168px 1fr; }
.valid { width: 256px; padding-left: 5px; }
.lk { color: #0b63ce; text-decoration: underline; }
.status b { margin-left: 2px; font-size: 12.4px; }
```
